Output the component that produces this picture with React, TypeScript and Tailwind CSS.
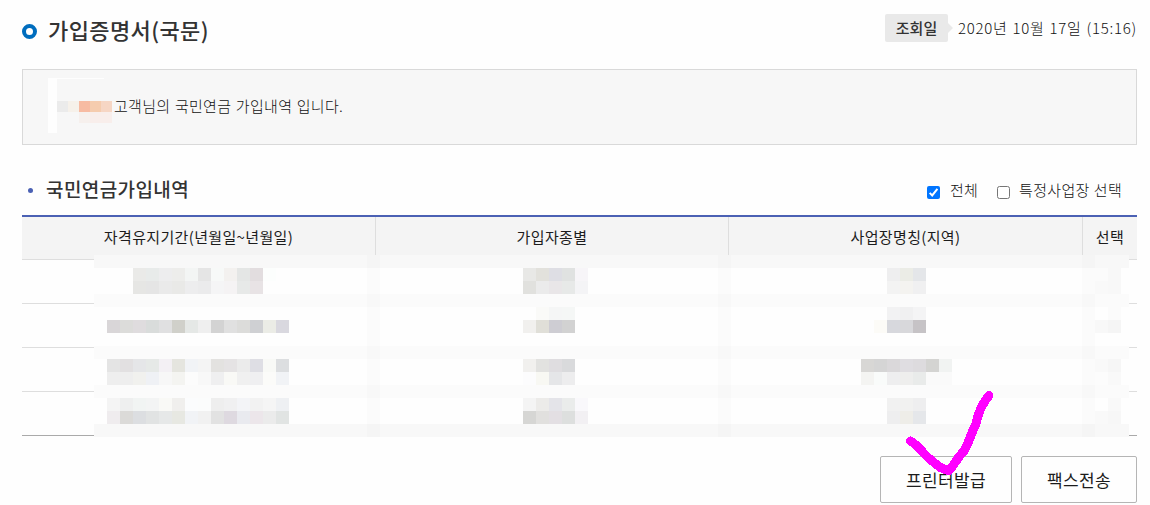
/**
 * Subscription Certificate Page
 * National pension history with masked records and issue actions
 */

import { memo } from "react"

const CELL = 13

// Masked records: [column, row, colours left to right]
const MASKED_RUNS: [number, number, string[]][] = [
	[3, 1, ["#eaeae8", "#e8ebea", "#ededee", "#ededeb", "#f3f5f4", "#e5e5e5", "#f7f9f8", "#f3f1ef", "#e4e6e5", "#e2dddf", "#fcfefd"]],
	[3, 2, ["#e6e6e4", "#e5e5e5", "#eaeaea", "#e9e9e7", "#ededee", "#ebebec", "#f5f5f6", "#f5f3f4", "#e7e9e8", "#e8e3e5"]],
	[1, 5, ["#d9d6d8", "#dcdcda", "#dfdcde", "#d9dcdb", "#e0e0e1", "#d0d0ca", "#e5e8e6", "#efefef", "#d3d3d3", "#e0e0e0", "#dcdcda", "#cfd0d3", "#ebece6", "#d9d8df"]],
	[1, 8, ["#e4e4e4", "#e2e0e1", "#e5e6e8", "#e6e9e7", "#f3f0f4", "#e5e5df", "#f1f3f6", "#f4f4f4", "#e3e2e0", "#e5e3e4", "#ebebeb", "#dedee4", "#f8f9f6", "#dcdee0"]],
	[1, 9, ["#eeeeee", "#eeeeee", "#f1f1ee", "#eff1f5", "#f7f7f7", "#f4f4f1", "#fcfcfc", "#f8f8f8", "#efeff0", "#f9f9f6", "#f0f0f0", "#efeff1", "#fbfbf9", "#f1f3f6"]],
	[1, 11, ["#f4f4f4", "#eeefef", "#f1f4f3", "#f3f4f4", "#f9f9f6", "#f0efed", "#fbfcfd", "#fbfcfc", "#eeeeee", "#f0f0f1", "#f3f4f7", "#f2f2f2", "#f5f5f5", "#eef0f3"]],
	[1, 12, ["#efecee", "#dbdad8", "#dcdee1", "#e1e3e3", "#e6e8e8", "#e7e8e2", "#f1f3f6", "#f1f1f1", "#e2e2e2", "#ded9e0", "#e9eaef", "#ece6ea", "#ebebeb", "#e1e4e3"]],
	[33, 1, ["#e8e8e6", "#e2e1dc", "#dedee4", "#e0e2e1", "#f7f5f8"]],
	[33, 2, ["#e1e1de", "#ebebeb", "#e9e6e8", "#e7e9e8", "#f4f4f6"]],
	[34, 4, ["#fafaf8", "#f5f6f6", "#f5f7f6"]],
	[33, 5, ["#f1f0ee", "#e0dfd8", "#cecdd3", "#d2d2d2"]],
	[33, 8, ["#f1f0ee", "#e2e2e0", "#dfdde0", "#d9dadc"]],
	[33, 9, ["#fcfcfd", "#f8f8f3", "#e5e6e8", "#ededee"]],
	[33, 11, ["#f4f4f4", "#ecebe9", "#e4e4e9", "#eaeceb", "#f9f8fb"]],
	[33, 12, ["#d6d6d4", "#e1e0de", "#e3dfe3", "#dddfde", "#f2f0f3"]],
	[61, 1, ["#eeeeef", "#ebece6", "#e4e6e9"]],
	[61, 2, ["#f3f3f3", "#f4f3f0", "#f0f0f1"]],
	[61, 4, ["#f2f2f3", "#f0f0f1", "#f4f4f5"]],
	[60, 5, ["#fcfbf7", "#d7d8dd", "#d8d8db", "#c6c3c6"]],
	[59, 8, ["#d8d7d5", "#d5d5d5", "#dad8da", "#dfdde1", "#dddbde", "#d4d4d2", "#f1f3f2"]],
	[59, 9, ["#f4f4f2", "#f9fbfa", "#eeeeef", "#eeeeed", "#e9ebea", "#fafafa", "#fafafa"]],
	[61, 11, ["#f1f1f1", "#f1f1f0", "#eeeeef"]],
	[61, 12, ["#eeeeef", "#eeede8", "#e5e7ea"]],
	[77, 1, ["#fbfbfb", "#f8f8f8"]],
	[77, 2, ["#f9f9f9", "#f8f8f8"]],
	[78, 4, ["#fbfbfb"]],
	[77, 5, ["#f8f8f8", "#f5f5f5"]],
	[77, 8, ["#f9f9f9", "#f6f6f6"]],
	[77, 9, ["#fcfcfc", "#f9f9f9"]],
	[78, 11, ["#f9f9f9"]],
	[77, 12, ["#f9f9f9", "#f7f7f7"]],
]

const MASK_BANDS = [
	{ row: 0, fill: "#f8f8f8" },
	{ row: 3, fill: "#fbfbfb" },
	{ row: 7, fill: "#fbfbfb" },
	{ row: 10, fill: "#fbfbfb" },
	{ row: 13, fill: "#f8f8f8" },
]

const HEADERS = ["자격유지기간(년월일~년월일)", "가입자종별", "사업장명칭(지역)", "선택"]

const MaskedRecords = memo(function MaskedRecords() {
	return (
		<svg
			aria-hidden="true"
			className="absolute left-[72px] top-[40px]"
			height={182}
			shapeRendering="crispEdges"
			viewBox="0 0 1035 182"
			width={1035}>
			<rect fill="#fefefe" height={182} width={1035} />
			{MASK_BANDS.map(({ row, fill }) => (
				<rect fill={fill} height={CELL} key={row} width={1035} y={row * CELL} />
			))}
			{[21, 48, 76].map((column) => (
				<rect fill="#000" fillOpacity={0.012} height={182} key={column} width={CELL} x={column * CELL} />
			))}
			{MASKED_RUNS.map(([column, row, colors]) =>
				colors.map((color, i) => (
					<rect
						fill={color}
						height={CELL}
						key={`${column}-${row}-${i}`}
						width={CELL}
						x={(column + i) * CELL}
						y={row * CELL}
					/>
				))
			)}
		</svg>
	)
})

function PageHeader() {
	return (
		<header className="flex h-[69px] items-start justify-between">
			<div className="flex items-start pt-[13px]">
				<span className="mt-[11px] h-[15px] w-[15px] rounded-full border-[4.5px] border-[#006dbe] bg-white" />
				<h1 className="ml-[11px] text-[22px] font-medium leading-8 tracking-[0.4px]">가입증명서(국문)</h1>
			</div>
			<div className="flex items-center pt-[14px]">
				<span className="h-7 w-[63px] rounded-[2px] bg-[#e9e9e9] text-center text-[15px] font-medium leading-7">
					조회일
				</span>
				<svg aria-hidden="true" height="10" viewBox="0 0 5 10" width="5">
					<path d="M0 0L5 5L0 10Z" fill="#e9e9e9" />
				</svg>
				<time className="ml-[5px] text-[15px] font-light leading-7 tracking-[0.75px] text-[#111] [word-spacing:0.8px]">
					2020년 10월 17일 (15:16)
				</time>
			</div>
		</header>
	)
}

function CustomerNotice() {
	return (
		<section className="relative h-[76px] border border-[#d9d9d9] bg-[#f7f7f7] pl-[91px]">
			<svg
				aria-hidden="true"
				className="absolute left-[25px] top-2"
				height="55"
				shapeRendering="crispEdges"
				viewBox="0 0 64 55"
				width="64">
				<path d="M0 0H56V1H9V55H0Z" fill="#fefefe" />
				<path d="M9 23h11v11H9z" fill="#ebebeb" />
				<path d="M20 23h11v11H20z" fill="#f6f1ea" />
				<path d="M31 23h11v11H31z" fill="#f7bba2" />
				<path d="M42 23h11v11H42z" fill="#f5ccae" />
				<path d="M53 23h11v11H53z" fill="#f6d6c4" />
				<path d="M31 34h11v11H31z" fill="#f6f0ed" />
				<path d="M42 34h22v11H42z" fill="#f8eeeb" />
			</svg>
			<p className="text-[15px] font-light leading-[72px] tracking-[0.3px] text-[#111] [word-spacing:0.9px]">
				고객님의 국민연금 가입내역 입니다.
			</p>
		</section>
	)
}

function HistoryFilter() {
	return (
		<div className="flex items-center pr-[15px] pt-[5px] text-[15px] font-light leading-6 tracking-[0.3px] text-[#111]">
			<label className="flex items-center">
				<svg aria-hidden="true" className="mt-[5px]" height="13" viewBox="0 0 13 13" width="13">
					<rect fill="#0075ff" height="13" rx="2" width="13" />
					<path d="M2.7 6.9L5.2 9.4L10.4 2.8" fill="none" stroke="#fff" strokeWidth="2" />
				</svg>
				<span className="ml-[10px]">전체</span>
			</label>
			<label className="ml-[19px] flex items-center">
				<span className="mt-[5px] h-[13px] w-[13px] rounded-[2.5px] border border-[#767676] bg-white" />
				<span className="ml-[9px] [word-spacing:0.6px]">특정사업장 선택</span>
			</label>
		</div>
	)
}

function HistoryTable() {
	return (
		<div className="relative">
			<table className="w-full table-fixed border-separate border-spacing-0 border-t-2 border-[#4b61b4]">
				<colgroup>
					<col className="w-[354px]" />
					<col className="w-[353px]" />
					<col className="w-[354px]" />
					<col className="w-[54px]" />
				</colgroup>
				<thead>
					<tr>
						{HEADERS.map((header) => (
							<th
								className="h-[43px] border-b border-r border-[#dedede] bg-[#f4f4f4] p-0 pb-[2px] text-[15px] font-normal leading-[40px] tracking-[0.35px] text-[#1c1c1c] last:border-r-0"
								key={header}
								scope="col">
								{header}
							</th>
						))}
					</tr>
				</thead>
				<tbody>
					{[0, 1, 2, 3].map((row) => (
						<tr className="group" key={row}>
							<td
								className="h-11 border-b border-[#dedede] p-0 group-last:border-[#aaa]"
								colSpan={4}
							/>
						</tr>
					))}
				</tbody>
			</table>
			<MaskedRecords />
		</div>
	)
}

function IssueActions() {
	return (
		<div className="relative mt-5 flex justify-end gap-[9px]">
			<button
				className="h-[47px] w-[132px] rounded-[2px] border border-[#b5b5b5] bg-[#fefefe] text-[17px] font-normal tracking-[0.4px] text-[#1c1c1c]"
				type="button">
				프린터발급
			</button>
			<button
				className="h-[47px] w-[116px] rounded-[2px] border border-[#b5b5b5] bg-[#fefefe] text-[17px] font-normal tracking-[0.4px] text-[#1c1c1c]"
				type="button">
				팩스전송
			</button>
			{/* Hand-drawn check over the print button */}
			<svg
				aria-hidden="true"
				className="pointer-events-none absolute right-[142px] top-[-66px]"
				height="88"
				shapeRendering="crispEdges"
				viewBox="905 390 90 88"
				width="90">
				<path
					d="M910.5 441C918 445 924 455 931 460C937 465 942 470 949 470.5C954 466 956 459 964 451C969 443 971 433 976 424C978 413 982 404 989 395.5"
					fill="none"
					stroke="#ff00ff"
					strokeLinecap="round"
					strokeLinejoin="round"
					strokeWidth="9"
				/>
			</svg>
		</div>
	)
}

export default function App() {
	return (
		<main className="h-[505px] overflow-hidden bg-[#fefefe] pl-[22px] pr-[13px] font-['Noto_Sans_CJK_KR',sans-serif] text-[#333]">
			<PageHeader />
			<CustomerNotice />
			<div className="flex h-[70px] items-start justify-between pt-[28px]">
				<div className="flex items-start">
					<span className="ml-[6px] mt-[15px] h-[5px] w-[5px] rounded-full bg-[#4b61b4]" />
					<h2 className="ml-[13px] text-[19px] font-medium leading-8 tracking-[0.4px]">국민연금가입내역</h2>
				</div>
				<HistoryFilter />
			</div>
			<HistoryTable />
			<IssueActions />
		</main>
	)
}
